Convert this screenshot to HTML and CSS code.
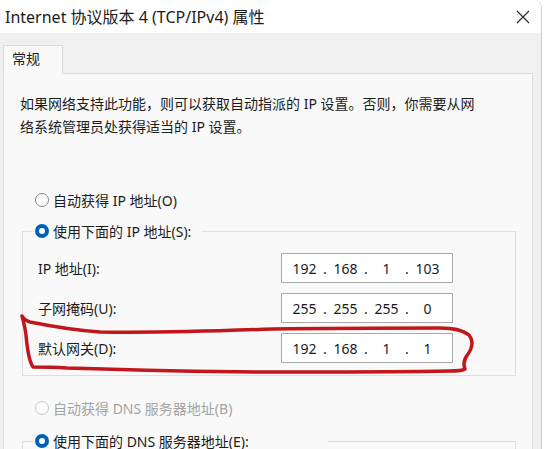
FILE: index.html
```html
<!DOCTYPE html>
<html lang="zh-CN">
<head>
<meta charset="utf-8">
<title>Internet 协议版本 4 (TCP/IPv4) 属性</title>
<link rel="stylesheet" href="styles.css">
</head>
<body>
<div class="window">
  <div class="titlebar">
    <span class="title">Internet 协议版本 4 (TCP/IPv4) 属性</span>
    <svg class="close" viewBox="0 0 14 14"><path d="M1 1 L13 13 M13 1 L1 13" stroke="#2b2b2b" stroke-width="1.2" fill="none"/></svg>
  </div>
  <div class="tabstrip">
    <div class="tab">常规</div>
  </div>
  <div class="panel">
    <p class="desc">如果网络支持此功能，则可以获取自动指派的 IP 设置。否则，你需要从网<br>络系统管理员处获得适当的 IP 设置。</p>
    <div class="radio top"><span class="dot"></span><span>自动获得 IP 地址(O)</span></div>
    <fieldset class="group first">
      <legend class="legend-ip"><div class="radio"><span class="dot on"></span><span>使用下面的 IP 地址(S):</span></div></legend>
      <div class="row"><label>IP 地址(I):</label>
        <div class="ip"><span>192</span><span>.</span><span>168</span><span>.</span><span>1</span><span>.</span><span>103</span></div></div>
      <div class="row"><label>子网掩码(U):</label>
        <div class="ip"><span>255</span><span>.</span><span>255</span><span>.</span><span>255</span><span>.</span><span>0</span></div></div>
      <div class="row"><label>默认网关(D):</label>
        <div class="ip"><span>192</span><span>.</span><span>168</span><span>.</span><span>1</span><span>.</span><span>1</span></div></div>
    </fieldset>
    <div class="radio dns disabled"><span class="dot"></span><span>自动获得 DNS 服务器地址(B)</span></div>
    <fieldset class="group second">
      <legend class="legend-dns"><div class="radio"><span class="dot on"></span><span>使用下面的 DNS 服务器地址(E):</span></div></legend>
    </fieldset>
  </div>
</div>
<svg class="mark" viewBox="0 0 547 449" width="547" height="449">
  <path d="M22,316 C24,319 26,321 30,322 C45,325 70,330 100,332 C150,333 220,331 273,329 C340,328 400,328 440,328 C452,328 463,330 469,335 C474,341 472,349 468,354 C464,359 463,364 465,369 C462,371 456,371 450,371 C400,372 330,372 273,372 C200,372 130,370 67,368 C52,367 40,367 33,367 C28,360 27,345 26,335 C25,326 23,320 22,316 Z" fill="none" stroke="#c3161c" stroke-width="3.5" stroke-linejoin="round"/>
</svg>
</body>
</html>
```
FILE: styles.css
```css
* { box-sizing: border-box; }
html, body { margin: 0; padding: 0; }
body {
  width: 547px;
  height: 449px;
  overflow: hidden;
  position: relative;
  background: #ffffff;
  font-family: "Noto Sans", "Noto Sans CJK SC", sans-serif;
  color: #1b1b1b;
}
.window {
  width: 542px;
  height: 449px;
  border-right: 1px solid #cfcfcf;
  border-top-right-radius: 8px;
  overflow: hidden;
  background: #f0f0f0;
}
.titlebar {
  height: 33px;
  background: #ffffff;
  display: flex;
  align-items: center;
  justify-content: space-between;
  padding: 0 11px 0 5px;
}
.title { font-size: 16px; line-height: 20px; }
.close { width: 14px; height: 14px; display: block; }
.tabstrip {
  height: 40px;
  padding: 12px 0 0 3px;
  display: flex;
}
.tab {
  width: 60px;
  height: 29px;
  background: #f9f9f9;
  border: 1px solid #dadada;
  border-bottom: none;
  font-size: 14px;
  line-height: 20px;
  padding: 3px 0 0 8px;
  position: relative;
  z-index: 1;
}
.panel {
  margin: 0 8px 0 3px;
  height: 400px;
  background: #f9f9f9;
  border: 1px solid #dcdcdc;
}
.desc {
  margin: 18px 0 0 16px;
  font-size: 14px;
  line-height: 23px;
  white-space: nowrap;
}
.radio {
  display: flex;
  align-items: center;
  gap: 4px;
  height: 24px;
  font-size: 14px;
  white-space: nowrap;
}
.radio.top { margin: 50px 0 0 31px; }
.radio.dns { margin: 20px 0 0 31px; }
.dot {
  width: 14px;
  height: 14px;
  border-radius: 50%;
  border: 1px solid #858585;
  background: #fdfdfd;
  flex: none;
}
.dot.on { border: 4px solid #005fb8; background: #ffffff; }
.radio.disabled { color: #a3a3a3; }
.radio.disabled .dot { border-color: #c8c8c8; }
.group {
  margin: 7px 16px 0 18px;
  padding: 10px 0 12px 0;
  border: 1px solid #dedede;
  min-width: 0;
}
.group.second { margin-top: 9px; height: 80px; }
.group legend { margin-left: 10px; padding: 0 10px 0 2px; }
.group legend.legend-dns { width: 295px; padding-right: 0; }
.row {
  display: flex;
  align-items: center;
  height: 30px;
  padding-left: 15px;
  font-size: 14px;
}
.row + .row { margin-top: 10px; }
.row label { width: 243px; flex: none; }
.ip {
  width: 172px;
  height: 30px;
  border: 1px solid #a8a8a8;
  background: #ffffff;
  display: grid;
  grid-template-columns: 35px 6px 35px 6px 35px 6px 35px;
  align-items: center;
  padding-left: 5px;
  text-align: center;
  font-size: 14px;
  color: #1b1b1b;
}
.mark {
  position: absolute;
  left: 0;
  top: 0;
  pointer-events: none;
}
```
